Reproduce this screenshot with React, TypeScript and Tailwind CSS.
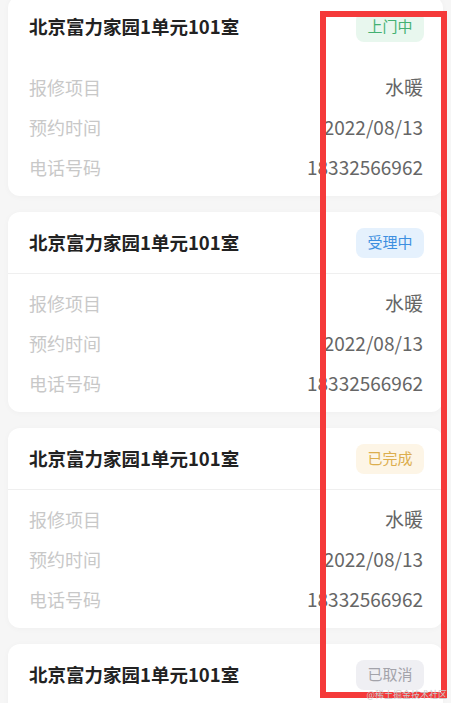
const orders = [
  { status: "上门中", tone: "green" },
  { status: "受理中", tone: "blue" },
  { status: "已完成", tone: "orange" },
  { status: "已取消", tone: "gray" },
];

const badgeTone: Record<string, string> = {
  green: "bg-[#e8f7ee] text-[#43b172]",
  blue: "bg-[#e5f1fd] text-[#3d8fe0]",
  orange: "bg-[#fdf5e6] text-[#dcae4e]",
  gray: "bg-[#efeff3] text-[#a3a3aa]",
};

const OrderCard = ({ status, tone, divider }: { status: string; tone: string; divider: boolean }) => {
  return (
    <div className="h-[200px] shrink-0 rounded-xl bg-white shadow-[0_1px_6px_rgba(0,0,0,0.03)]">
      {/* header */}
      <div
        className={`flex h-[62px] items-center justify-between pl-[21px] pr-[19px] border-b ${
          divider ? "border-[#efefef]" : "border-transparent"
        }`}
      >
        <span className="text-[18.5px] font-semibold text-[#222]">北京富力家园1单元101室</span>
        <span
          className={`flex h-[30px] w-[68px] items-center justify-center rounded-lg text-[15px] ${badgeTone[tone]}`}
        >
          {status}
        </span>
      </div>
      {/* rows */}
      <div className="flex flex-col pt-[9px] pl-[21px] pr-[20px] text-[18px]">
        <div className="flex h-10 items-center justify-between">
          <span className="text-[#c8c8c8]">报修项目</span>
          <span className="text-[19px] text-[#666]">水暖</span>
        </div>
        <div className="flex h-10 items-center justify-between">
          <span className="text-[#c8c8c8]">预约时间</span>
          <span className="text-[19px] text-[#666]">2022/08/13</span>
        </div>
        <div className="flex h-10 items-center justify-between">
          <span className="text-[#c8c8c8]">电话号码</span>
          <span className="text-[19px] text-[#666]">18332566962</span>
        </div>
      </div>
    </div>
  );
};

export default function App() {
  return (
    <div
      className="relative h-[703px] w-[451px] overflow-hidden bg-[#f6f6f6]"
      style={{ fontFamily: '"Noto Sans CJK SC", "Noto Sans", sans-serif' }}
    >
      <div className="-mt-1 flex flex-col gap-4 px-2">
        {orders.map((o, i) => (
          <OrderCard key={i} status={o.status} tone={o.tone} divider={i > 0} />
        ))}
      </div>

      {/* red annotation box */}
      <div className="absolute left-[320px] top-[11px] h-[687px] w-[127px] border-[6px] border-[#f53a3a]" />
      <span className="absolute bottom-[2px] right-[4px] text-[9px] text-[#c8c8c8]">@稀土掘金技术社区</span>
    </div>
  );
}
